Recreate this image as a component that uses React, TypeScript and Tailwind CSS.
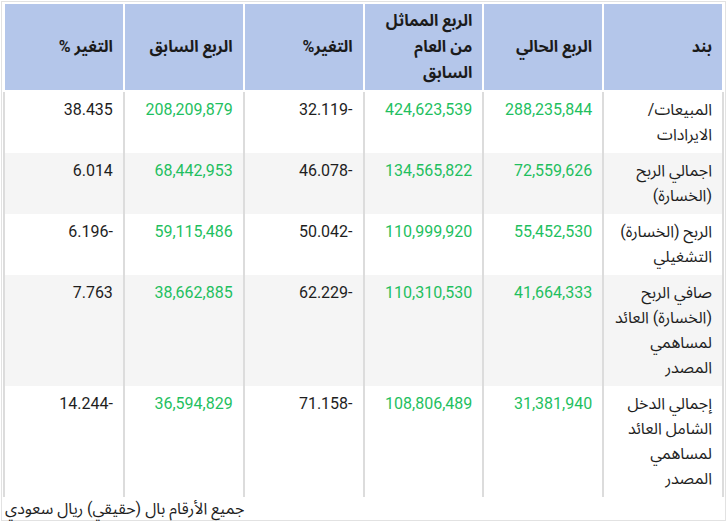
const headers = ["بند", "الربع الحالي", "الربع المماثل من العام السابق", "التغير%", "الربع السابق", "التغير %"]

interface Row {
    label: string
    current: string
    lastYear: string
    change: string
    previous: string
    changePrev: string
}

const rows: Row[] = [
    { label: "المبيعات/ الايرادات", current: "288,235,844", lastYear: "424,623,539", change: "-32.119", previous: "208,209,879", changePrev: "38.435" },
    { label: "اجمالي الربح (الخسارة)", current: "72,559,626", lastYear: "134,565,822", change: "-46.078", previous: "68,442,953", changePrev: "6.014" },
    { label: "الربح (الخسارة) التشغيلي", current: "55,452,530", lastYear: "110,999,920", change: "-50.042", previous: "59,115,486", changePrev: "-6.196" },
    { label: "صافي الربح (الخسارة) العائد لمساهمي المصدر", current: "41,664,333", lastYear: "110,310,530", change: "-62.229", previous: "38,662,885", changePrev: "7.763" },
    { label: "إجمالي الدخل الشامل العائد لمساهمي المصدر", current: "31,381,940", lastYear: "108,806,489", change: "-71.158", previous: "36,594,829", changePrev: "-14.244" },
]

const cell = "border-x-2 border-[#dcdcdc] px-[10px] pt-[5px] pb-[6px] align-top text-right leading-[25px]"

export default function App()
{
    return (
        <div className="pt-px pl-px font-['Roboto','Noto_Sans_Arabic','DejaVu_Sans',sans-serif] text-[16px] text-[#1e1e1e]">
            <div className="w-[725px] border border-[#e2e2e2] px-px">
                <table dir="rtl" className="w-full table-fixed border-collapse">
                    <thead>
                        <tr>
                            {headers.map((h) => (
                                <th key={h} className="h-[88px] border-2 border-white bg-[#b4c6ea] px-[10px] py-[2px] text-right align-middle font-bold leading-[26px] text-[#1b1b1b]">
                                    {h}
                                </th>
                            ))}
                        </tr>
                    </thead>
                    <tbody>
                        {rows.map((r, i) => (
                            <tr key={r.label} className={i % 2 === 1 ? "bg-[#f5f5f5]" : "bg-white"}>
                                <td className={cell}>{r.label}</td>
                                <td className={cell + " text-[#1fbf5f]"}>{r.current}</td>
                                <td className={cell + " text-[#1fbf5f]"}>{r.lastYear}</td>
                                <td className={cell}>{r.change}</td>
                                <td className={cell + " text-[#1fbf5f]"}>{r.previous}</td>
                                <td className={cell}>{r.changePrev}</td>
                            </tr>
                        ))}
                    </tbody>
                </table>
                <p dir="rtl" className="text-left leading-[23px] pl-[2px]">جميع الأرقام بال (حقيقي) ريال سعودي</p>
            </div>
        </div>
    )
}
